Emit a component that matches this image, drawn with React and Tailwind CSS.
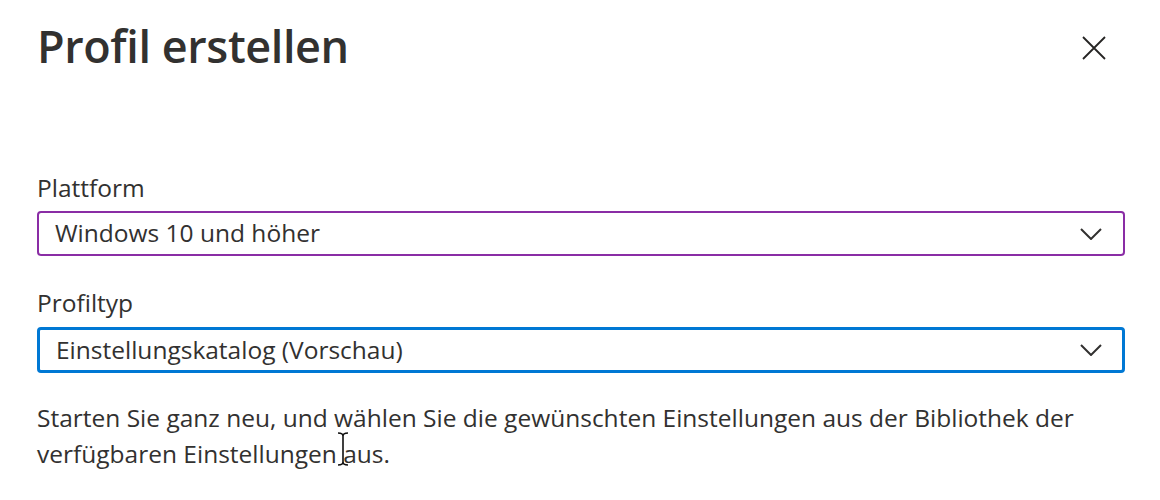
import { useState } from "react";

const Chevron = () => (
  <svg width="22" height="12" viewBox="0 0 22 12" fill="none" className="shrink-0">
    <path d="M1 1l10 10L21 1" stroke="#323130" strokeWidth="2" />
  </svg>
);

const Dropdown = ({ value, focused }) => (
  <div
    className={
      focused
        ? "flex h-[46px] items-center justify-between rounded-[4px] border-[3px] border-[#0078d4] pl-[16px] pr-[20px]"
        : "flex h-[45px] items-center justify-between rounded-[4px] border-2 border-[#8a2da5] pl-[16px] pr-[21px]"
    }
  >
    <span className="text-[24.5px] text-[#323130]">{value}</span>
    <Chevron />
  </div>
);

export default function App() {
  const [platform] = useState("Windows 10 und höher");
  const [type] = useState("Einstellungskatalog (Vorschau)");

  return (
    <div
      className="relative h-[500px] w-[1160px] bg-white pl-[37px] pr-[35px] text-[#323130]"
      style={{ fontFamily: '"Open Sans", "Noto Sans", sans-serif' }}
    >
      <div className="flex items-start justify-between pt-[16px]">
        <h1 className="text-[45px] font-semibold leading-[60px] tracking-[-0.4px]">Profil erstellen</h1>
        <button className="mr-[19px] mt-[20px]">
          <svg width="24" height="24" viewBox="0 0 24 24" fill="none">
            <path d="M1 1l22 22M23 1L1 23" stroke="#252423" strokeWidth="1.8" />
          </svg>
        </button>
      </div>

      <div className="w-[1088px] pt-[96px]">
        <label className="block text-[24.5px] leading-[32px]">Plattform</label>
        <div className="mt-[7px]">
          <Dropdown value={platform} />
        </div>

        <label className="mt-[31px] block text-[24.5px] leading-[32px]">Profiltyp</label>
        <div className="mt-[8px]">
          <Dropdown value={type} focused />
        </div>

        <p className="mt-[27px] text-[24.5px] leading-[36px]">
          Starten Sie ganz neu, und wählen Sie die gewünschten Einstellungen aus der Bibliothek der verfügbaren
          Einstellungen aus.
        </p>
      </div>

      <svg className="absolute left-[337px] top-[432px]" width="12" height="34" viewBox="0 0 12 34" fill="none">
        <path d="M1 1c3 0 5 1 5 3v26c0 2-2 3-5 3M11 1c-3 0-5 1-5 3M11 33c-3 0-5-1-5-3" stroke="#111" strokeWidth="1.6" />
      </svg>
    </div>
  );
}
